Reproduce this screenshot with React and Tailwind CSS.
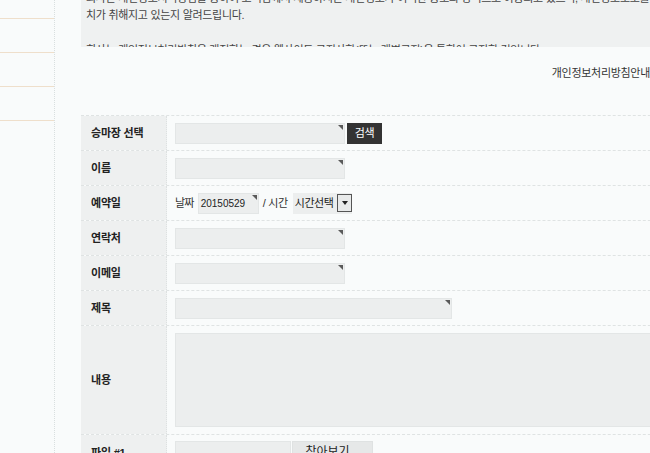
import React from "react";

function Tri() {
  return (
    <span className="absolute right-[1px] top-[1px] w-0 h-0 border-t-[5px] border-t-[#5a5a5a] border-l-[5px] border-l-transparent" />
  );
}

function Field({ w, h = 21, children, tri = true }) {
  return (
    <div
      className={`relative bg-[#eceeee] border border-[#e3e6e6] ${w} ${h === 21 ? "h-[21px]" : h}`}
    >
      {children}
      {tri && <Tri />}
    </div>
  );
}

function Row({ label, children, h = "h-[35px]" }) {
  return (
    <div className={`flex ${h} border-b border-dashed border-[#dfe3e3]`}>
      <div className="w-[86px] shrink-0 bg-[#eef0f0] border-r border-dotted border-[#dde1e1] flex items-center pl-[10px] font-bold text-[11px] tracking-[-0.2px] text-[#222]">
        {label}
      </div>
      <div className="flex-1 flex items-center pl-[8px]">{children}</div>
    </div>
  );
}

export default function App() {
  return (
    <div className="w-[650px] h-[453px] overflow-hidden bg-[#f9fbfb] flex font-['Liberation_Sans','Noto_Sans_CJK_KR',sans-serif] text-[#333]">
      <aside className="w-[55px] shrink-0 border-r border-dotted border-[#d9dfdf] pt-[18px]">
        <div className="h-[34px] border-t border-[#efdfcb]" />
        <div className="h-[34px] border-t border-[#efdfcb]" />
        <div className="h-[34px] border-t border-[#efdfcb]" />
        <div className="h-[34px] border-t border-[#efdfcb]" />
      </aside>
      <main className="flex-1 min-w-0 pl-[26px] overflow-hidden">
        <div className="h-[47px] overflow-hidden bg-[#eff1f1] pl-[5px] text-[11px] tracking-[-0.3px] leading-[17.5px] text-[#444]">
          <div className="mt-[-10.5px] whitespace-nowrap">
            <p>회사는 개인정보처리방침을 통하여 고객님께서 제공하시는 개인정보가 어떠한 용도와 방식으로 이용되고 있으며, 개인정보보호를 위해 어떠한 조</p>
            <p>치가 취해지고 있는지 알려드립니다.</p>
            <p>&nbsp;</p>
            <p>회사는 개인정보처리방침을 개정하는 경우 웹사이트 공지사항(또는 개별공지)을 통하여 공지할 것입니다.</p>
          </div>
        </div>
        <div className="pt-[19px] h-[68px] text-right text-[11px] tracking-[-0.3px] leading-[14px] text-[#333]">
          개인정보처리방침안내
        </div>
        <div className="w-[620px] border-t border-dashed border-[#dfe3e3]">
          <Row label="승마장 선택">
            <Field w="w-[170px]" />
            <button className="ml-[2px] h-[21px] w-[35px] bg-[#333] text-white text-[11px] tracking-[-0.3px]">
              검색
            </button>
          </Row>
          <Row label="이름">
            <Field w="w-[170px]" />
          </Row>
          <Row label="예약일">
            <span className="text-[11px] tracking-[-0.8px] mr-[4px]">날짜</span>
            <Field w="w-[61px]">
              <span className="block pl-[2px] text-[10px] leading-[19px] text-[#222]">20150529</span>
            </Field>
            <span className="text-[11px] tracking-[-0.3px] ml-[4px] mr-[5px]">/ 시간</span>
            <div className="flex items-center h-[21px] bg-[#eceeee] pl-[2px]">
              <span className="text-[11px] tracking-[-0.5px] text-[#222] mr-[4px]">시간선택</span>
              <span className="w-[15px] h-[18px] border border-[#555] bg-[#e8eaea] flex items-center justify-center">
                <span className="w-0 h-0 border-t-[4px] border-t-[#222] border-x-[3px] border-x-transparent" />
              </span>
            </div>
          </Row>
          <Row label="연락처">
            <Field w="w-[170px]" />
          </Row>
          <Row label="이메일">
            <Field w="w-[170px]" />
          </Row>
          <Row label="제목">
            <Field w="w-[277px]" />
          </Row>
          <Row label="내용" h="h-[109px]">
            <Field w="w-[500px]" h="h-[94px]" tri={false} />
          </Row>
          <div className="flex h-[40px]">
            <div className="w-[86px] shrink-0 bg-[#eef0f0] border-r border-dotted border-[#dde1e1] pl-[10px] pt-[10px] font-bold text-[11px] tracking-[-0.2px] text-[#222]">
              파일 #1
            </div>
            <div className="flex-1 flex items-start pl-[8px] pt-[6px]">
              <div className="w-[116px] h-[21px] bg-[#eceeee] border border-[#e3e6e6]" />
              <button className="ml-[1px] w-[81px] h-[21px] bg-[#e6e8e8] border border-[#dfe2e2] text-[12px] text-[#222] leading-[14px]">
                찾아보기...
              </button>
            </div>
          </div>
        </div>
      </main>
    </div>
  );
}
